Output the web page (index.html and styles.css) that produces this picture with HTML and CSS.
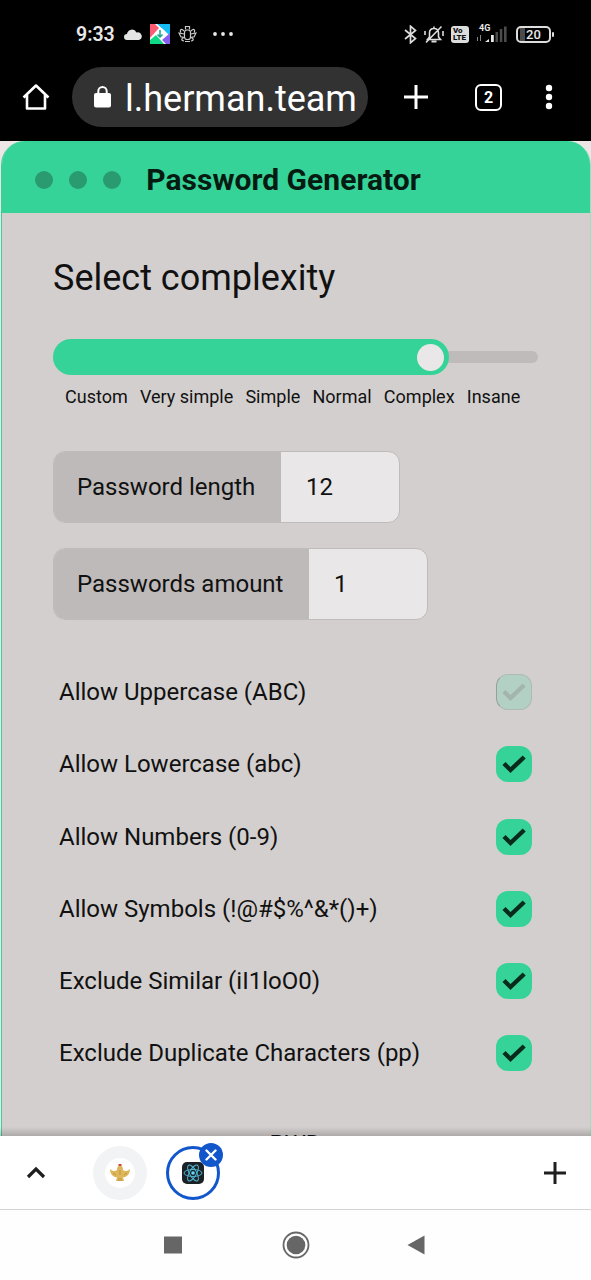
FILE: index.html
```html
<!DOCTYPE html>
<html lang="en">
<head>
<meta charset="utf-8">
<title>Password Generator</title>
<link rel="stylesheet" href="styles.css">
</head>
<body>
<div class="phone">
  <div class="status">
    <span class="time">9:33</span>
    <svg class="cloud" width="18" height="11" viewBox="0 0 18 11"><path fill="#e4e4e4" d="M3 11a3 3 0 0 1 0-6A5 5 0 0 1 12.500 3.500 3.900 3.900 0 0 1 15 11z"/></svg>
    <svg class="pinwheel" width="20" height="20" viewBox="0 0 20 20"><path fill="#fff" d="M0 0h20v20H0z"/><path fill="#fb5c74" d="M0 0h5l4 4-9 10z"/><path fill="#16bdf5" d="M7 0h13v12l-6-6z"/><path fill="#0fd886" d="M0 16l6-5 8 9H0z"/><path fill="#8560ef" d="M20 9v11h-4l-4-4z"/><path d="M10 6v7M7.500 10.500L10 13l2.500-2.500" fill="none" stroke="#12a98a" stroke-width="1.500"/></svg>
    <svg class="bug" width="19" height="18" viewBox="0 0 19 18" fill="none" stroke="#ccc" stroke-width="1.200"><rect x="6.500" y="5" width="6" height="9.500" rx="2.500"/><path d="M7.500 4.500V1.500h4v3M6 6C3 3 1.500 5 3 7.500M13 6c3-3 4.500-1 3 1.500M6 9L1 8l2 4h2.500M13 9l5-1-2 4h-2.500M6 12.500c-3 1-3 3 0 3.500M13 12.500c3 1 3 3 0 3.500M7 16.500h5"/></svg>
    <svg class="more" width="20" height="4" viewBox="0 0 20 4" fill="#e8e8e8"><circle cx="2" cy="2" r="1.900"/><circle cx="10" cy="2" r="1.900"/><circle cx="18" cy="2" r="1.900"/></svg>
    <span class="grow"></span>
    <svg class="bluetooth" width="13" height="19" viewBox="0 0 13 19"><path d="M1 5l10.500 8.500-5 4.300V1.200l5 4.300L1 14" fill="none" stroke="#ddd" stroke-width="1.700"/></svg>
    <svg class="bell" width="20" height="19" viewBox="0 0 20 19" fill="none" stroke="#ddd" stroke-width="1.600"><path d="M3.500 14.500h13l-2-2.500V8c0-3-2-4.500-4.500-4.500S5.500 5 5.500 8v4zM17.500 1.500L2 17.500M10 1.500v2M1 6v4M19 6v5"/><path d="M7.500 16.500h5" stroke-width="2"/></svg>
    <span class="volte"><b>Vo</b><b>LTE</b></span>
    <span class="signal"><b>4G</b>
    <svg width="30" height="18" viewBox="0 0 30 18"><path fill="#888" d="M0 12h1v4H0zM3 10h1v6H3z"/><path fill="#e8e8e8" d="M8 17l4-3v3zM14 10h2.800v7H14z"/><path fill="#4b4b4b" d="M18.500 7h2.500v10h-2.500zM22.800 4h2.500v13h-2.500zM27 1.500h2.600V17H27z"/></svg></span>
    <span class="battery"><b>20</b></span>
  </div>
  <div class="browser">
    <svg class="home" width="28" height="28" viewBox="0 0 28 28"><path d="M1.500 14.500L14 2.500l12.500 12M5 12v13.500h18V12" fill="none" stroke="#fff" stroke-width="2.600" stroke-linejoin="round"/></svg>
    <div class="address">
      <svg width="17" height="22" viewBox="0 0 17 22"><rect y="7" width="17" height="14.500" rx="2" fill="#fff"/><path d="M4.300 8V5.300a4.200 4.200 0 0 1 8.400 0V8" fill="none" stroke="#fff" stroke-width="2"/></svg>
      <span>l.herman.team</span>
    </div>
    <svg class="new-tab" width="24" height="24" viewBox="0 0 24 24"><path d="M12 0v24M0 12h24" stroke="#fff" stroke-width="3"/></svg>
    <span class="tabs">2</span>
    <svg class="menu" width="8" height="26" viewBox="0 0 8 26" fill="#fff"><circle cx="4" cy="4" r="3.200"/><circle cx="4" cy="13" r="3.200"/><circle cx="4" cy="22" r="3.200"/></svg>
  </div>
  <main class="page">
    <section class="window">
      <header class="titlebar"><i></i><i></i><i></i><h1>Password Generator</h1></header>
      <div class="content">
        <h2>Select complexity</h2>
        <div class="slider"><div class="fill"><div class="knob"></div></div><div class="track"></div></div>
        <div class="levels"><span>Custom</span><span>Very simple</span><span>Simple</span><span>Normal</span><span>Complex</span><span>Insane</span></div>
        <div class="field length"><label>Password length</label><span>12</span></div>
        <div class="field amount"><label>Passwords amount</label><span>1</span></div>
        <div class="options">
          <div class="option"><span>Allow Uppercase (ABC)</span><div class="box off"><svg width="24" height="20" viewBox="0 0 24 20"><path d="M2 9.500l6.500 6.500L22.200 3" fill="none" stroke="#a4b5ac" stroke-width="4.400"/></svg></div></div>
          <div class="option"><span>Allow Lowercase (abc)</span><div class="box"><svg width="24" height="20" viewBox="0 0 24 20"><path d="M2 9.500l6.500 6.500L22.200 3" fill="none" stroke="#082b1d" stroke-width="4.400"/></svg></div></div>
          <div class="option"><span>Allow Numbers (0-9)</span><div class="box"><svg width="24" height="20" viewBox="0 0 24 20"><path d="M2 9.500l6.500 6.500L22.200 3" fill="none" stroke="#082b1d" stroke-width="4.400"/></svg></div></div>
          <div class="option"><span>Allow Symbols (!@#$%^&amp;*()+)</span><div class="box"><svg width="24" height="20" viewBox="0 0 24 20"><path d="M2 9.500l6.500 6.500L22.200 3" fill="none" stroke="#082b1d" stroke-width="4.400"/></svg></div></div>
          <div class="option"><span>Exclude Similar (iI1loO0)</span><div class="box"><svg width="24" height="20" viewBox="0 0 24 20"><path d="M2 9.500l6.500 6.500L22.200 3" fill="none" stroke="#082b1d" stroke-width="4.400"/></svg></div></div>
          <div class="option"><span>Exclude Duplicate Characters (pp)</span><div class="box"><svg width="24" height="20" viewBox="0 0 24 20"><path d="M2 9.500l6.500 6.500L22.200 3" fill="none" stroke="#082b1d" stroke-width="4.400"/></svg></div></div>
        </div>
        <div class="result">PWD</div>
      </div>
    </section>
  </main>
  <div class="tabstrip">
    <svg class="chevron" width="20" height="14" viewBox="0 0 20 14"><path d="M2 11l8-8 8 8" fill="none" stroke="#1f1f1f" stroke-width="3.200"/></svg>
    <div class="tab bird"><div class="disc"><svg width="22" height="18" viewBox="0 0 22 18"><path fill="#deb75c" d="M1 5c3 2.500 5 2.500 7 1 0-3 1-4.500 3-4.500S14 3 14 6c2 1.500 4 1.500 7-1 0 4-2 7-5 8l-2 .500 1 3.500H7l1-3.500L6 13C3 12 1 9 1 5z"/><path fill="#c84b3b" d="M9.500 0h3v2h-3z"/><path stroke="#b98b32" stroke-width=".8" d="M4 9l3 2M18 9l-3 2M11 6v5M10 14v3M12 14v3"/></svg></div></div>
    <div class="tab active">
      <svg width="22" height="22" viewBox="0 0 22 22"><rect width="22" height="22" rx="5" fill="#1c2126"/><g fill="none" stroke="#4fb6d0" stroke-width="1"><ellipse cx="11" cy="11" rx="9" ry="3.500"/><ellipse cx="11" cy="11" rx="9" ry="3.500" transform="rotate(60 11 11)"/><ellipse cx="11" cy="11" rx="9" ry="3.500" transform="rotate(120 11 11)"/></g><circle cx="11" cy="11" r="1.800" fill="#61dafb"/></svg>
      <div class="close"><svg width="12" height="12" viewBox="0 0 12 12"><path d="M1.500 1.500l9 9M10.500 1.500l-9 9" stroke="#fff" stroke-width="2.400" stroke-linecap="round"/></svg></div>
    </div>
    <svg class="add" width="22" height="22" viewBox="0 0 22 22"><path d="M11 0v22M0 11h22" stroke="#1f1f1f" stroke-width="3"/></svg>
  </div>
  <nav class="nav">
    <svg class="recent" width="18" height="18" viewBox="0 0 18 18"><path fill="#666" d="M0 .5h18v17H0z"/></svg>
    <svg class="round" width="28" height="28" viewBox="0 0 28 28"><circle cx="14" cy="14" r="12.500" fill="none" stroke="#666" stroke-width="1.800"/><circle cx="14" cy="14" r="9.300" fill="#666"/></svg>
    <svg class="back" width="18" height="20" viewBox="0 0 18 20"><path fill="#666" d="M17.500 .5v19L.5 10z"/></svg>
  </nav>
</div>
</body>
</html>
```
FILE: styles.css
```css
* { box-sizing: border-box; }
body { margin: 0; background: #fff; font-family: Roboto, sans-serif; color: #111; }
svg { display: block; flex: none; }
h1, h2 { margin: 0; font-weight: 400; white-space: nowrap; }
.phone { width: 591px; height: 1280px; display: flex; flex-direction: column; overflow: hidden; }

.status { height: 67px; flex: none; display: flex; align-items: center; padding: 1px 38px 0 76px; background: #000; color: #e8e8e8; }
.time { width: 39px; font-size: 19.500px; font-weight: 600; white-space: nowrap; }
.cloud { margin-left: 9px; }
.pinwheel { margin-left: 8px; }
.bug { margin-left: 8px; }
.more { margin-left: 16px; }
.grow { flex: 1; }
.bluetooth { margin-right: 7px; }
.bell { margin-right: 7px; }
.volte { width: 18px; height: 17px; margin-right: 8px; border-radius: 3px; background: #ddd; color: #111; display: flex; flex-direction: column; padding: 1px 0 0 2px; font-size: 8px; line-height: 7.500px; font-weight: 900; }
.volte b { height: 7.500px; }
.signal { position: relative; width: 31px; height: 18px; margin-right: 8px; }
.signal b { position: absolute; left: 2px; top: -1px; font-size: 9px; line-height: 9px; }
.battery { position: relative; width: 35px; height: 17px; margin-right: 2px; border: 2px solid #ddd; border-radius: 5px; background: linear-gradient(90deg, #000 2px, #4a4a4a 2px, #4a4a4a 7px, #000 7px); display: flex; align-items: center; justify-content: center; font-size: 13px; }
.battery b { font-weight: 500; }
.battery::after { content: ""; position: absolute; right: -5px; top: 4px; width: 2px; height: 5px; border-radius: 1px; background: #ddd; }

.browser { height: 74px; flex: none; display: flex; align-items: center; padding: 0 0 14px 22px; background: #000; }
.address { width: 296px; height: 60px; margin-left: 22px; border-radius: 30px; background: #323232; display: flex; align-items: center; padding-left: 22px; color: #fff; }
.address span { margin-left: 14px; font-size: 36px; line-height: 60px; padding-top: 3px; white-space: nowrap; }
.new-tab { margin-left: 36px; }
.tabs { width: 27px; height: 27px; margin-left: 47px; border: 2.500px solid #fff; border-radius: 6px; color: #fff; font-size: 16px; font-weight: 700; line-height: 23px; text-align: center; }
.menu { margin-left: 43px; }

.page { position: relative; height: 995px; flex: none; background: #ece6e6; overflow: hidden; }
.page::after { content: ""; position: absolute; left: 0; right: 0; bottom: 0; height: 9px; background: linear-gradient(transparent, rgba(0, 0, 0, 0.180)); }
.window { height: 1100px; margin: 0 0 0 1px; border: 1px solid #36d399; border-top: 0; border-right-color: #8de8c4; border-radius: 24px 24px 0 0; background: #d3cfce; overflow: hidden; }
.titlebar { height: 72px; margin: 0 -1px; padding-left: 34px; background: #36d399; display: flex; align-items: center; padding-top: 5px; }
.titlebar i { width: 18px; height: 18px; margin-right: 15.900px; border-radius: 50%; background: #2a9b70; }
.titlebar h1 { margin-left: 9.500px; font-size: 30px; font-weight: 700; line-height: 40px; letter-spacing: 0.040px; color: #051a11; }
.content { padding: 41px 52px 0 51px; }
.content h2 { font-size: 36px; line-height: 48px; }
.slider { height: 36px; margin-top: 37px; display: flex; align-items: center; width: 485px; }
.fill { width: 396px; height: 36px; border-radius: 18px; background: #36d399; display: flex; align-items: center; justify-content: flex-end; padding-right: 5px; position: relative; z-index: 1; }
.knob { width: 27px; height: 27px; border-radius: 50%; background: #e9e7e7; }
.track { height: 12px; flex: 1; margin-left: -8px; background: #bebbba; border-radius: 0 6px 6px 0; }
.levels { display: flex; gap: 12.200px; padding-left: 12px; margin-top: 10px; font-size: 18px; line-height: 24px; white-space: nowrap; }
.field { height: 72px; display: flex; border: 1px solid #bebbba; border-radius: 12px; background: #e9e7e7; overflow: hidden; font-size: 24px; line-height: 71px; white-space: nowrap; }
.field label { background: #bebab9; padding-left: 23px; flex: none; }
.field span { padding-left: 25px; }
.length { width: 347px; margin-top: 42.300px; }
.length label { width: 227px; }
.amount { width: 375px; margin-top: 24.300px; }
.amount label { width: 255px; }
.options { margin-top: 36.500px; padding: 0 6px; }
.option { height: 72.200px; display: flex; align-items: center; justify-content: space-between; font-size: 24px; white-space: nowrap; }
.box { width: 36px; height: 36px; border-radius: 12px; background: #36d399; display: flex; align-items: center; justify-content: center; }
.off { background: #b2d0c3; border: 1px solid #acbab3; border-left-color: #989f9b; }
.result { margin-top: 41px; text-align: center; font-size: 24px; line-height: 28px; }

.tabstrip { height: 73px; flex: none; display: flex; align-items: center; padding-left: 26px; background: #fff; }
.tab { position: relative; width: 54px; height: 54px; border-radius: 50%; display: flex; align-items: center; justify-content: center; }
.bird { margin-left: 47px; background: #f1f3f5; }
.disc { width: 30px; height: 30px; border-radius: 50%; background: #fff; display: flex; align-items: center; justify-content: center; }
.active { margin-left: 18.500px; border: 3px solid #1256cc; }
.close { position: absolute; left: 30px; top: -6px; width: 24px; height: 24px; border-radius: 50%; background: #1256cc; display: flex; align-items: center; justify-content: center; }
.add { margin-left: 324px; }
.nav { height: 71px; flex: none; display: flex; align-items: center; padding: 0 0 1px 164px; border-top: 1px solid #d4d4d4; background: #fefefe; }
.round { margin-left: 99.500px; }
.back { margin-left: 97px; }
```
